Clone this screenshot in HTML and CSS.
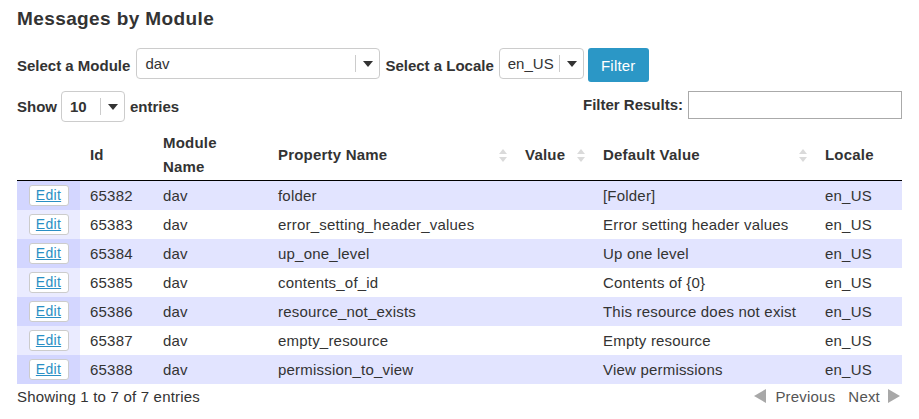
FILE: index.html
```html
<!DOCTYPE html>
<html>
<head>
<meta charset="utf-8">
<title>Messages by Module</title>
<link rel="stylesheet" href="styles.css">
</head>
<body>
<div class="page">
  <h1 class="title">Messages by Module</h1>
  <div class="toolbar">
    <span class="lbl">Select a Module</span>
    <div class="select sel-module"><span class="val">dav</span><span class="sep"></span><span class="caret"></span></div>
    <span class="lbl lbl-locale">Select a Locale</span>
    <div class="select sel-locale"><span class="val">en_US</span><span class="sep"></span><span class="caret"></span></div>
    <button class="btn">Filter</button>
  </div>
  <div class="controls">
    <div class="length">
      <span class="lbl">Show</span>
      <div class="select sel-len"><span class="val">10</span><span class="sep"></span><span class="caret"></span></div>
      <span class="lbl">entries</span>
    </div>
    <div class="search">
      <span class="lbl">Filter Results:</span>
      <input class="search-input" type="text">
    </div>
  </div>
  <table class="grid">
    <colgroup>
      <col class="c1"><col class="c2"><col class="c3"><col class="c4"><col class="c5"><col class="c6"><col class="c7">
    </colgroup>
    <thead>
      <tr>
        <th></th>
        <th>Id</th>
        <th>Module<br>Name</th>
        <th class="sortable">Property Name<span class="sort"></span></th>
        <th class="sortable">Value<span class="sort"></span></th>
        <th class="sortable">Default Value<span class="sort"></span></th>
        <th>Locale</th>
      </tr>
    </thead>
    <tbody>
      <tr class="odd"><td class="first"><a class="edit" href="#">Edit</a></td><td>65382</td><td>dav</td><td>folder</td><td></td><td>[Folder]</td><td>en_US</td></tr>
      <tr class="even"><td class="first"><a class="edit" href="#">Edit</a></td><td>65383</td><td>dav</td><td>error_setting_header_values</td><td></td><td>Error setting header values</td><td>en_US</td></tr>
      <tr class="odd"><td class="first"><a class="edit" href="#">Edit</a></td><td>65384</td><td>dav</td><td>up_one_level</td><td></td><td>Up one level</td><td>en_US</td></tr>
      <tr class="even"><td class="first"><a class="edit" href="#">Edit</a></td><td>65385</td><td>dav</td><td>contents_of_id</td><td></td><td>Contents of {0}</td><td>en_US</td></tr>
      <tr class="odd"><td class="first"><a class="edit" href="#">Edit</a></td><td>65386</td><td>dav</td><td>resource_not_exists</td><td></td><td>This resource does not exist</td><td>en_US</td></tr>
      <tr class="even"><td class="first"><a class="edit" href="#">Edit</a></td><td>65387</td><td>dav</td><td>empty_resource</td><td></td><td>Empty resource</td><td>en_US</td></tr>
      <tr class="odd"><td class="first"><a class="edit" href="#">Edit</a></td><td>65388</td><td>dav</td><td>permission_to_view</td><td></td><td>View permissions</td><td>en_US</td></tr>
    </tbody>
  </table>
  <div class="footer">
    <span class="info">Showing 1 to 7 of 7 entries</span>
    <div class="pager">
      <span class="arrow left"></span>
      <span class="plink">Previous</span>
      <span class="plink">Next</span>
      <span class="arrow right"></span>
    </div>
  </div>
</div>
</body>
</html>
```

FILE: styles.css
```css
* { box-sizing: border-box; }
html, body { margin: 0; padding: 0; background: #fff; }
body {
  font-family: "Liberation Sans", Arial, sans-serif;
  font-size: 15px;
  letter-spacing: 0.2px;
  color: #333;
}
.page { padding: 7px 17px 0 17px; width: 919px; }
.title {
  margin: 0;
  font-size: 19px;
  line-height: 24px;
  letter-spacing: 0.4px;
  font-weight: bold;
  color: #333;
}
.toolbar {
  margin-top: 17px;
  display: flex;
  align-items: center;
  height: 34px;
}
.lbl { font-weight: bold; color: #333; white-space: nowrap; flex: none; letter-spacing: 0; }
.select {
  position: relative;
  flex: none;
  height: 31px;
  border: 1px solid #ccc;
  border-radius: 4px;
  background: #fff;
  display: flex;
  align-items: center;
  padding-left: 8px;
}
.select .val { color: #333; letter-spacing: 0; }
.select .sep {
  position: absolute;
  right: 23px;
  top: 6px;
  bottom: 6px;
  width: 1px;
  background: #ccc;
}
.select .caret {
  position: absolute;
  right: 6px;
  top: 12px;
  width: 0; height: 0;
  border-left: 5px solid transparent;
  border-right: 5px solid transparent;
  border-top: 6px solid #333;
}
.sel-module { width: 244px; margin-left: 6px; margin-top: -3px; }
.lbl-locale { margin-left: 5px; }
.sel-locale { width: 85px; margin-left: 5px; margin-top: -3px; }
.btn {
  flex: none;
  margin-left: 4px;
  width: 61px;
  height: 34px;
  border: 0;
  border-radius: 3px;
  background: #2b97c6;
  color: #fff;
  font-family: "Liberation Sans", Arial, sans-serif;
  font-size: 15px;
  letter-spacing: 0.2px;
  padding: 0;
}
.controls {
  margin-top: 8px;
  display: flex;
  justify-content: space-between;
  align-items: center;
  height: 32px;
}
.length { display: flex; align-items: center; }
.sel-len { width: 64px; margin: 0 5px 0 4px; }
.sel-len .val { font-weight: bold; }
.search { display: flex; align-items: center; margin-top: -3px; }
.search-input {
  margin-left: 5px;
  width: 214px;
  height: 28px;
  border: 1px solid #aaa;
  border-radius: 0;
  padding: 0 4px;
}
.grid {
  margin-top: 8px;
  width: 885px;
  table-layout: fixed;
  border-collapse: collapse;
}
.c1 { width: 63px; }
.c2 { width: 73px; }
.c3 { width: 115px; }
.c4 { width: 247px; }
.c5 { width: 78px; }
.c6 { width: 222px; }
.c7 { width: 87px; }
.grid th {
  text-align: left;
  font-weight: bold;
  line-height: 24px;
  padding: 1px 10px;
  height: 50px;
  border-bottom: 1px solid #000;
  vertical-align: middle;
  position: relative;
}
.sort {
  position: absolute;
  right: 8px;
  top: 19px;
  width: 8px;
  height: 13px;
}
.sort::before, .sort::after {
  content: "";
  position: absolute;
  left: 0;
  width: 0; height: 0;
  border-left: 4px solid transparent;
  border-right: 4px solid transparent;
}
.sort::before { top: 0; border-bottom: 5px solid #dadada; }
.sort::after { bottom: 0; border-top: 5px solid #dadada; }
.grid td {
  height: 29px;
  padding: 0 10px;
  vertical-align: middle;
  white-space: nowrap;
  overflow: hidden;
}
tr.odd td { background: #e2e4ff; }
tr.odd td.first { background: #d3d6ff; }
tr.even td { background: #fff; }
tr.even td.first { background: #eaebff; }
.grid td.first { text-align: center; padding: 0; }
.edit {
  display: inline-block;
  width: 40px;
  height: 21px;
  line-height: 19px;
  border: 1px solid #ccc;
  border-radius: 3px;
  background: #fff;
  color: #2a8fc4;
  text-decoration: underline;
  font-size: 14px;
  letter-spacing: 0.3px;
  vertical-align: middle;
}
.footer {
  display: flex;
  justify-content: space-between;
  align-items: center;
  height: 24px;
  padding-top: 1px;
}
.info { color: #333; }
.pager { display: flex; align-items: center; margin-right: 2px; }
.plink { color: #555; }
.plink + .plink { margin-left: 13px; }
.arrow { width: 0; height: 0; border-top: 7px solid transparent; border-bottom: 7px solid transparent; }
.arrow.left { border-right: 12px solid #a8a8a8; margin-right: 9px; }
.arrow.right { border-left: 12px solid #a8a8a8; margin-left: 8px; }
```
